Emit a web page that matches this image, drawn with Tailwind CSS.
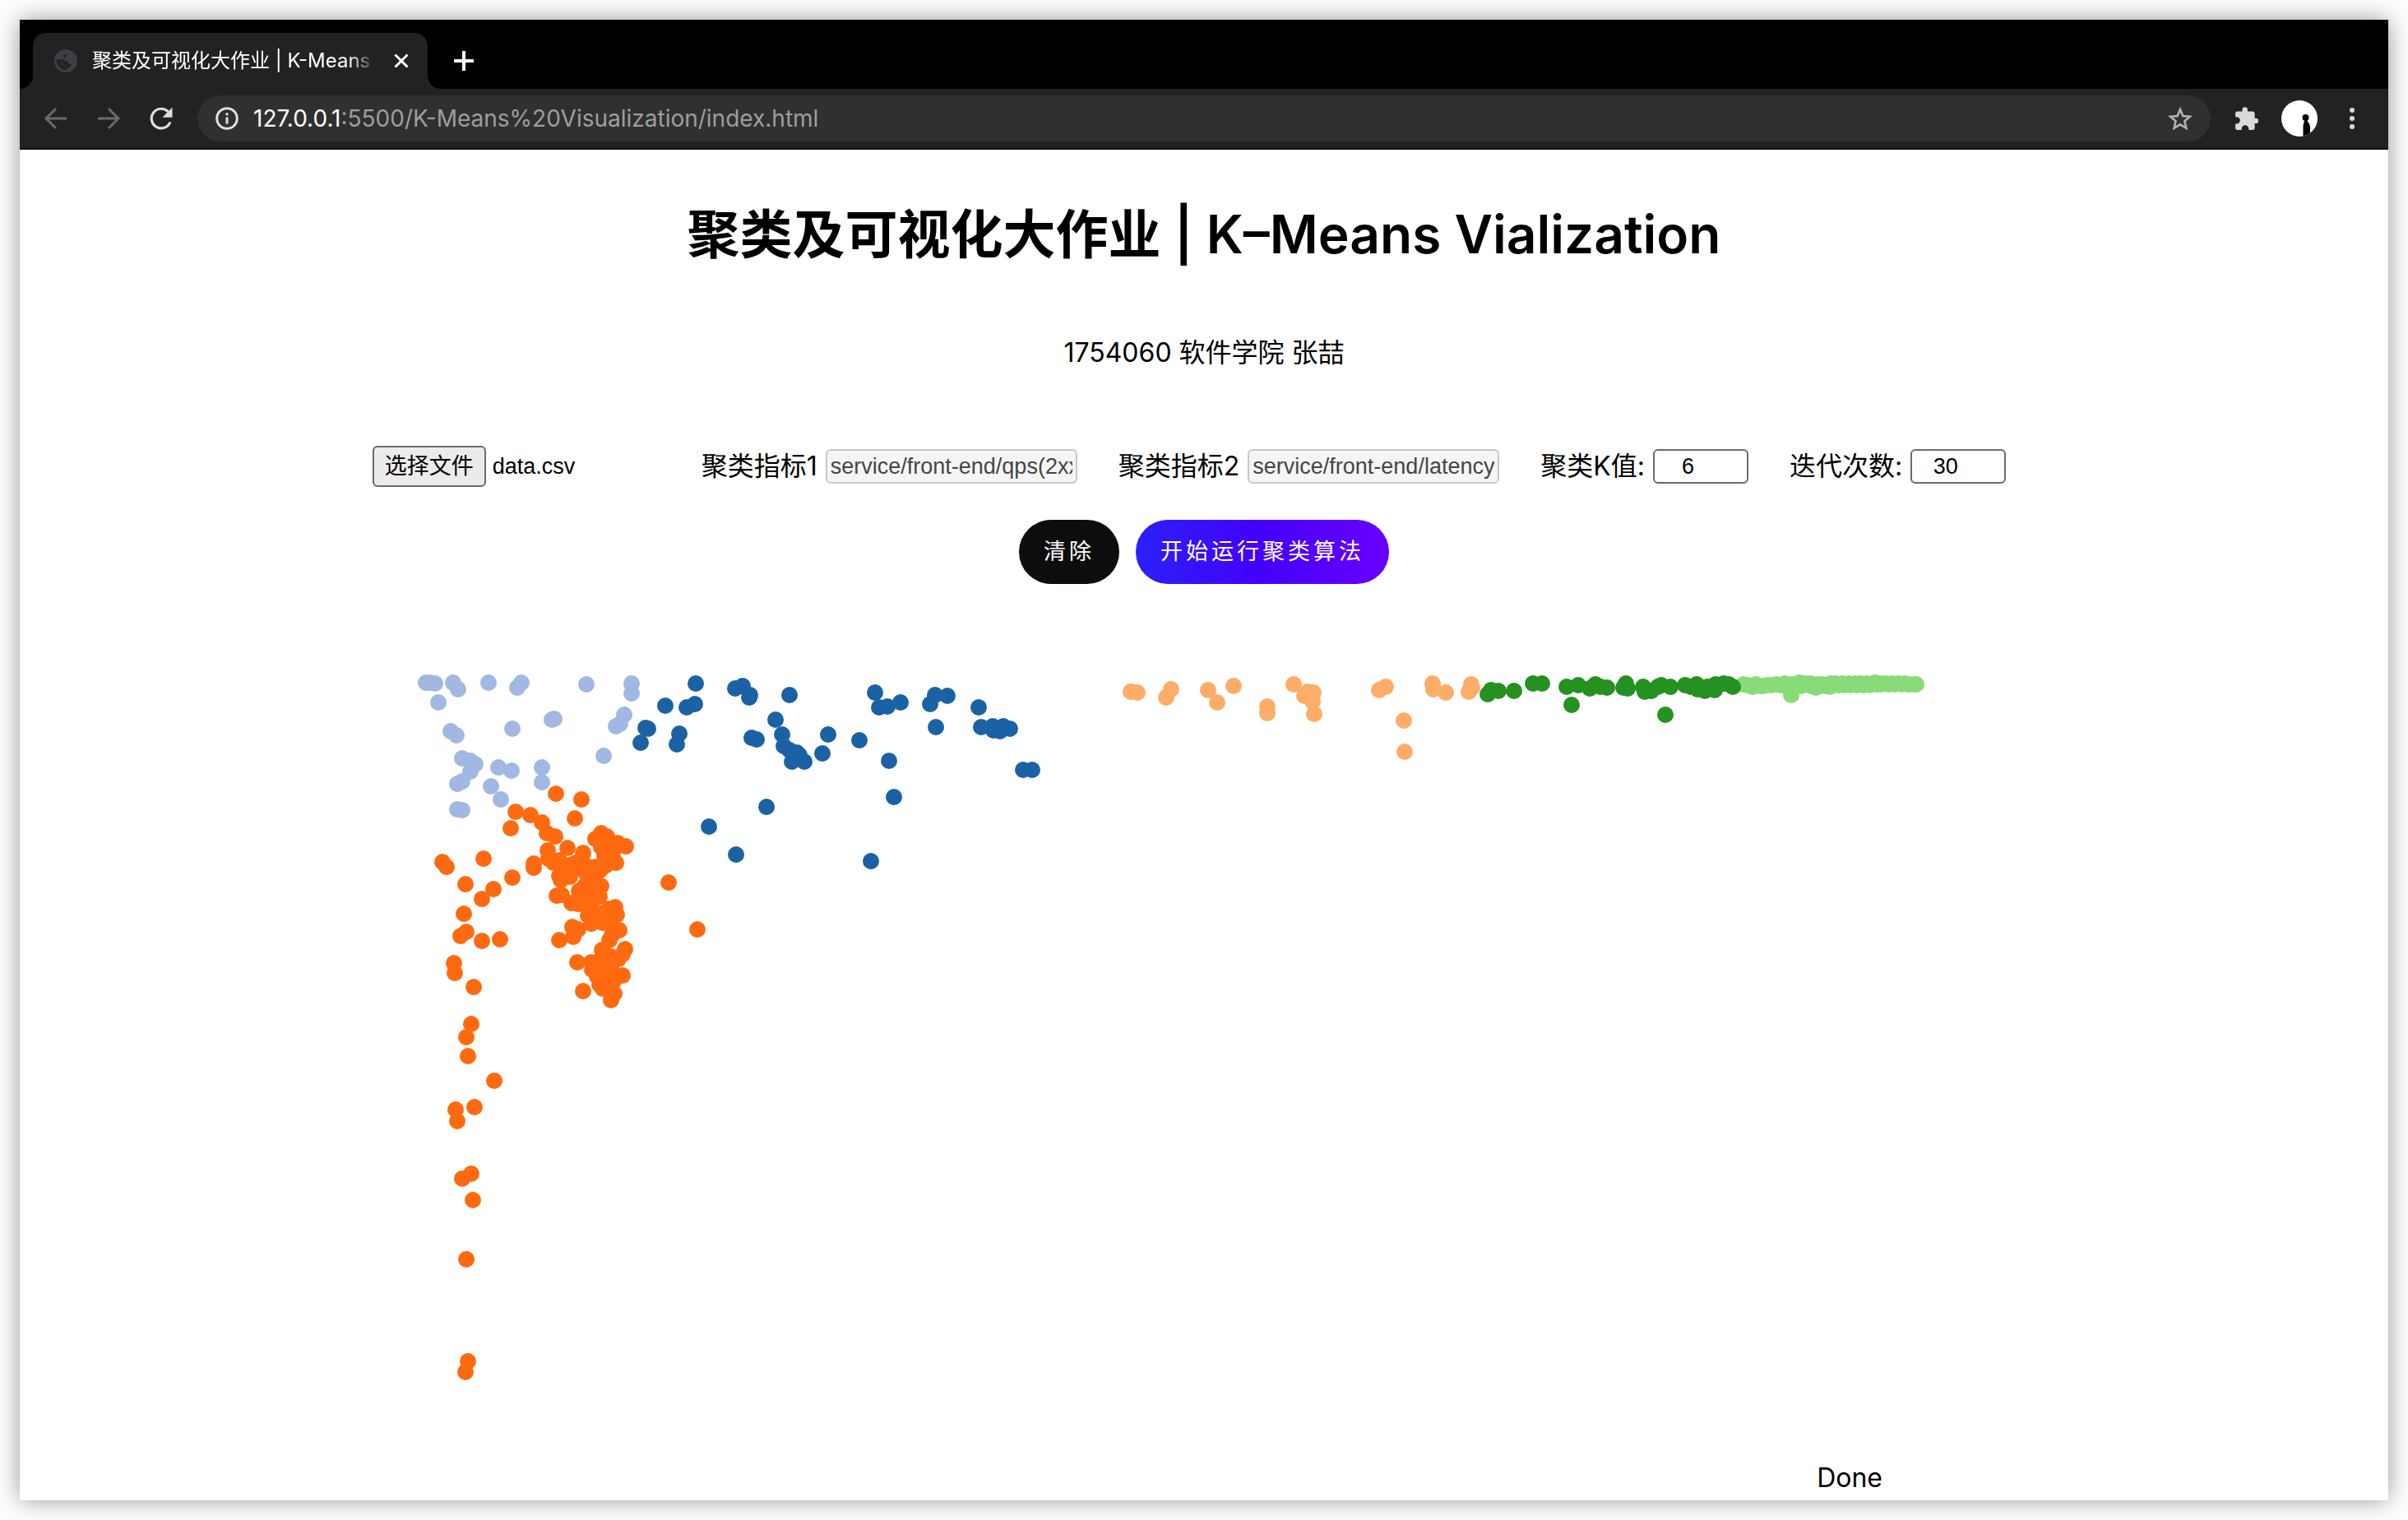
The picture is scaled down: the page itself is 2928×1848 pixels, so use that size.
<!DOCTYPE html>
<html lang="zh-CN">
<head>
<meta charset="utf-8">
<title>聚类及可视化大作业 | K-Means Visualization</title>
<script src="https://cdn.jsdelivr.net/npm/@tailwindcss/browser@4"></script>
</head>
<body class="flex min-h-screen flex-col bg-white p-6 font-['Inter','Noto_Sans_CJK_SC',sans-serif] text-black">
<div class="flex flex-1 flex-col bg-white shadow-[0_0_28px_rgba(0,0,0,0.42)]">

  <!-- Browser chrome -->
  <header>
    <div class="flex h-[84px] items-end bg-black">
      <svg class="h-4 w-4 text-[#222222]" viewBox="0 0 16 16" fill="currentColor" aria-hidden="true"><path d="M16 0v16H0A16 16 0 0 0 16 0z"/></svg>
      <div class="flex h-[68px] w-[480px] items-center rounded-t-2xl bg-[#222222] pr-4 pl-[26px] text-white">
        <svg class="h-7 w-7 shrink-0" viewBox="0 0 28 28" aria-hidden="true">
          <circle cx="14" cy="14" r="14" fill="#3e3f46"/>
          <path fill="#222222" d="M17 2.800c-.5 2.500-2 3.400-4.500 3.200-1.700 1.200-1 3-.2 4 .6 1.200-.8 2.300-3 2.200 2 1.800 7 .9 7.600 3.600.3 2 1.900 2.600 3.800 2.400-.8 3.400-3.700 4.800-6.900 7.200 0-3-.2-4.800-2.700-5.600-1.900-.7-1.900-2.900-1.400-4.400L2.800 11.500c-.5 7 3.600 12.200 9.500 13.500l1.500.2V22c-1.800 0-3-1.300-3-3v-1.300l-5.500-5.600c2 .2 5.700.2 7 .1z" fill-rule="evenodd"/>
        </svg>
        <span class="ml-[18px] w-[346px] overflow-hidden text-[24px] whitespace-nowrap [mask-image:linear-gradient(to_right,black_90%,transparent)]">聚类及可视化大作业 | K-Means Visualization</span>
        <button class="ml-auto flex h-8 w-8 items-center justify-center" aria-label="关闭标签页"><svg class="h-5 w-5" viewBox="0 0 20 20" fill="none" stroke="currentColor" stroke-width="3" aria-hidden="true"><path d="M2.500 2.500l15 15M17.500 2.500l-15 15"/></svg></button>
      </div>
      <svg class="h-4 w-4 text-[#222222]" viewBox="0 0 16 16" fill="currentColor" aria-hidden="true"><path d="M0 0v16h16A16 16 0 0 1 0 0z"/></svg>
      <button class="ml-2 flex h-[68px] w-10 items-center justify-center text-white" aria-label="新标签页"><svg class="h-6 w-6" viewBox="0 0 24 24" fill="none" stroke="currentColor" stroke-width="4" aria-hidden="true"><path d="M12 0v24M0 12h24"/></svg></button>
    </div>
    <div class="flex h-[74px] items-center border-b-2 border-[#111111] bg-[#222222] pl-[26px]">
      <button class="flex w-[36px] justify-center text-[#6b6b6b]" aria-label="后退"><svg class="h-7 w-7" viewBox="0 0 28 28" fill="none" stroke="currentColor" stroke-width="3" aria-hidden="true"><path d="M27 14H3M14 2L2 14l12 12"/></svg></button>
      <button class="ml-7 flex w-[36px] justify-center text-[#6b6b6b]" aria-label="前进"><svg class="h-7 w-7" viewBox="0 0 28 28" fill="none" stroke="currentColor" stroke-width="3" aria-hidden="true"><path d="M1 14h24M14 2l12 12-12 12"/></svg></button>
      <button class="ml-7 flex w-[36px] justify-center text-[#dddddd]" aria-label="重新加载"><svg class="h-7 w-7" viewBox="0 0 28 28" aria-hidden="true"><path d="M25 18.500A11.800 11.800 0 1 1 22.500 5.800" fill="none" stroke="currentColor" stroke-width="3.200"/><path d="M27.500.5v12.300H15.500z" fill="currentColor"/></svg></button>
      <form class="ml-[26px] flex h-14 flex-1 items-center rounded-full bg-[#303030] pr-[22px] pl-[22px]">
        <svg class="h-7 w-7 shrink-0 text-[#e0e0e0]" viewBox="0 0 28 28" fill="none" stroke="currentColor" stroke-width="3" aria-hidden="true"><circle cx="14" cy="14" r="12.300"/><path d="M14 12.500v8M14 7.200v3"/></svg>
        <span class="ml-[18px] flex-1 text-[28px] text-[#9e9e9e]"><span class="text-white">127.0.0.1</span>:5500/K-Means%20Visualization/index.html</span>
        <button type="button" aria-label="收藏"><svg class="h-7 w-[30px] text-[#b4b4b4]" viewBox="0 0 30 28" fill="none" stroke="currentColor" stroke-width="2.600" aria-hidden="true"><path d="M15 3l3.300 8 8.600.7-6.500 5.600 2 8.500L15 21.300l-7.400 4.500 2-8.500-6.500-5.600 8.600-.7z"/></svg></button>
      </form>
      <button class="ml-[30px]" aria-label="扩展程序"><svg class="h-7 w-7 text-[#dadada]" viewBox="0 0 28 28" fill="currentColor" aria-hidden="true"><path d="M8.500 5.500V3.400a3.200 3.200 0 0 1 6.400 0v2.100h6.200a2.500 2.500 0 0 1 2.500 2.500v5.700h1.200a3.200 3.200 0 0 1 0 6.400h-1.200V25.500a2.500 2.500 0 0 1-2.500 2.500h-4.800v-1.500a4.300 4.300 0 0 0-8.600 0V28H2.600A2.500 2.500 0 0 1 .1 25.500v-4.900h1.500a4.200 4.200 0 0 0 0-8.400H.1V8a2.500 2.500 0 0 1 2.500-2.500z"/></svg></button>
      <button class="ml-7" aria-label="个人资料"><svg class="h-11 w-11" viewBox="0 0 44 44" aria-hidden="true"><circle cx="22" cy="22" r="22" fill="#fff"/><circle cx="29.500" cy="21" r="4" fill="#000"/><path d="M28 24h3.500c0 2.500 3.500 3.500 3.500 9v6.500a22 22 0 0 1-8.500 4V33c0-5 1.800-6.500 1.500-9z" fill="#000"/></svg></button>
      <button class="mr-9 ml-[34px]" aria-label="菜单"><svg class="h-7 w-4 text-[#dadada]" viewBox="0 0 16 28" fill="currentColor" aria-hidden="true"><circle cx="8" cy="4" r="3"/><circle cx="8" cy="14" r="3"/><circle cx="8" cy="24" r="3"/></svg></button>
    </div>
  </header>

  <!-- Page -->
  <main class="flex flex-1 flex-col items-center">
    <h1 class="mt-[58px] text-[64px] leading-[90px] font-semibold">聚类及可视化大作业 | K–Means Vialization</h1>
    <p class="mt-[76px] text-[32px] leading-[46px]">1754060 软件学院 张喆</p>

    <form class="mt-[90px] flex items-center gap-[50px] pr-9 text-[32px] leading-[50px]">
      <div class="flex w-[350px] items-center gap-2 font-['Liberation_Sans','Noto_Sans_CJK_SC',sans-serif] text-[27px]">
        <input id="file" type="file" class="sr-only">
        <label for="file" class="flex h-[50px] items-center rounded-md border-2 border-[#6b6b6b] bg-[#ebebeb] px-[13px]">选择文件</label>
        <span>data.csv</span>
      </div>
      <div class="flex items-center gap-[10px]">
        <label for="metric1">聚类指标1</label>
        <input id="metric1" disabled value="service/front-end/qps(2xx)" class="h-[42px] w-[306px] rounded-md border-2 border-[#c8c8c8] bg-[#f5f5f5] px-1 font-['Liberation_Sans',sans-serif] text-[27px] text-[#454545]">
      </div>
      <div class="flex items-center gap-[10px]">
        <label for="metric2">聚类指标2</label>
        <input id="metric2" disabled value="service/front-end/latency" class="h-[42px] w-[306px] rounded-md border-2 border-[#c8c8c8] bg-[#f5f5f5] px-1 font-['Liberation_Sans',sans-serif] text-[27px] text-[#454545]">
      </div>
      <div class="flex items-center gap-[10px]">
        <label for="k">聚类K值:</label>
        <input id="k" type="number" value="6" class="h-[42px] w-[116px] [appearance:textfield] rounded-md border-2 border-[#6b6b6b] bg-white pr-4 text-center font-['Liberation_Sans',sans-serif] text-[27px]">
      </div>
      <div class="flex items-center gap-[10px]">
        <label for="iterations">迭代次数:</label>
        <input id="iterations" type="number" value="30" class="h-[42px] w-[116px] [appearance:textfield] rounded-md border-2 border-[#6b6b6b] bg-white pr-4 text-center font-['Liberation_Sans',sans-serif] text-[27px]">
      </div>
    </form>

    <div class="mt-10 flex gap-5 text-[27px] tracking-[4px] text-white">
      <button class="h-[78px] rounded-full bg-[#0d0d0d] px-[30px]">清除</button>
      <button class="h-[78px] rounded-full bg-[linear-gradient(to_right,#2b20f8,#4400fb_50%,#6a00ff)] px-[30px]">开始运行聚类算法</button>
    </div>

    <svg id="plot" class="mt-10 h-[1020px] w-[2000px]" viewBox="464 750 2000 1020" role="img" aria-label="K-Means 聚类散点图"></svg>

    <output class="mt-auto w-[1960px] pr-[155px] text-right text-[32px] leading-[54px]">Done</output>
  </main>
</div>

<script>
const clusters = [
  { color: '#a0b8e2', points: '518,830 523,830 529,831 551,830 557,838 594,830 634,830 629,836 533,854 713,832 768,831 768,843 759,869 754,880 749,883 623,886 671,875 674,874 548,889 555,894 734,919 562,922 572,925 578,929 572,938 562,950 556,953 606,933 622,937 659,933 659,951 597,956 609,972 556,984 562,985' },
  { color: '#ff6a10', points: '676,965 707,972 699,995 627,987 645,991 659,1000 621,1007 665,1013 675,1017 666,1034 690,1031 709,1037 588,1044 538,1048 543,1054 566,1075 600,1081 586,1093 623,1067 649,1050 649,1055 564,1111 567,1133 560,1138 586,1144 608,1142 552,1171 553,1183 576,1200 573,1245 813,1073 848,1130 731,1013 738,1017 724,1020 731,1030 751,1025 761,1029 742,1029 745,1037 735,1040 749,1049 737,1052 724,1054 730,1058 725,1062 667,1044 673,1049 680,1046 700,1049 692,1052 704,1055 680,1065 682,1070 693,1066 713,1062 718,1065 704,1083 711,1077 731,1077 725,1083 729,1090 677,1089 683,1088 695,1098 703,1099 710,1097 718,1102 715,1113 719,1123 727,1110 733,1122 740,1105 748,1103 750,1112 742,1117 753,1131 747,1127 696,1127 703,1130 697,1139 680,1143 744,1137 741,1143 732,1155 760,1154 757,1160 752,1166 743,1163 702,1170 719,1170 730,1167 720,1179 733,1177 743,1175 757,1186 726,1187 729,1197 733,1202 740,1193 748,1190 744,1198 747,1208 743,1216 709,1205 567,1261 569,1284 601,1314 554,1349 577,1346 556,1363 562,1433 573,1427 575,1459 567,1531 569,1655 566,1668 737,1110 722,1092 735,1160 713,1092 738,1185 710,1050' },
  { color: '#1b62a5', points: '846,831 809,858 835,860 845,856 785,885 788,886 779,903 826,892 823,905 894,837 903,834 912,845 911,848 960,845 943,875 951,893 914,897 920,899 953,907 960,912 969,915 972,918 963,926 978,926 1007,893 1000,916 1045,900 1064,842 1069,860 1079,859 1095,854 1131,856 1137,845 1152,846 1138,884 1190,860 1193,884 1207,883 1208,888 1216,889 1220,883 1228,886 1081,925 1244,936 1255,936 1087,969 932,981 862,1005 895,1039 1059,1047' },
  { color: '#fdad67', points: '1375,841 1383,842 1424,838 1418,848 1469,839 1480,854 1500,834 1541,859 1541,867 1573,832 1586,846 1590,841 1597,842 1596,853 1598,868 1677,839 1685,835 1742,831 1743,838 1758,842 1789,832 1790,836 1786,841 1707,876 1708,914' },
  { color: '#88dc78', points: '2120,832 2125,833 2131,835 2135,832 2140,834 2144,834 2149,833 2154,833 2160,832 2165,833 2170,831 2172,834 2178,845 2178,832 2183,833 2188,830 2190,834 2195,831 2201,831 2202,834 2208,836 2210,832 2213,834 2216,832 2220,834 2225,835 2226,831 2230,833 2232,831 2236,833 2240,831 2243,833 2248,831 2250,833 2256,831 2258,833 2262,831 2266,833 2270,831 2274,833 2278,831 2280,830 2282,832 2286,831 2288,832 2292,831 2296,832 2300,831 2304,832 2308,831 2312,832 2316,831 2320,832 2325,832 2330,832' },
  { color: '#259120', points: '1809,844 1813,839 1822,840 1841,840 1864,831 1875,831 1905,835 1919,833 1933,837 1940,832 1954,836 1946,835 1911,857 1977,831 1974,836 1979,837 1998,835 2000,841 2008,840 2020,833 2016,835 2031,835 2025,869 2049,833 2056,835 2063,832 2064,838 2073,840 2085,839 2086,832 2096,831 2102,832 2107,835 2076,835' },
];
const plot = document.getElementById('plot');
for (const { color, points } of clusters) {
  const group = document.createElementNS('http://www.w3.org/2000/svg', 'g');
  group.setAttribute('fill', color);
  for (const point of points.split(' ')) {
    const [x, y] = point.split(',');
    const dot = document.createElementNS('http://www.w3.org/2000/svg', 'circle');
    dot.setAttribute('cx', x);
    dot.setAttribute('cy', y);
    dot.setAttribute('r', 10);
    group.append(dot);
  }
  plot.append(group);
}
</script>
</body>
</html>
